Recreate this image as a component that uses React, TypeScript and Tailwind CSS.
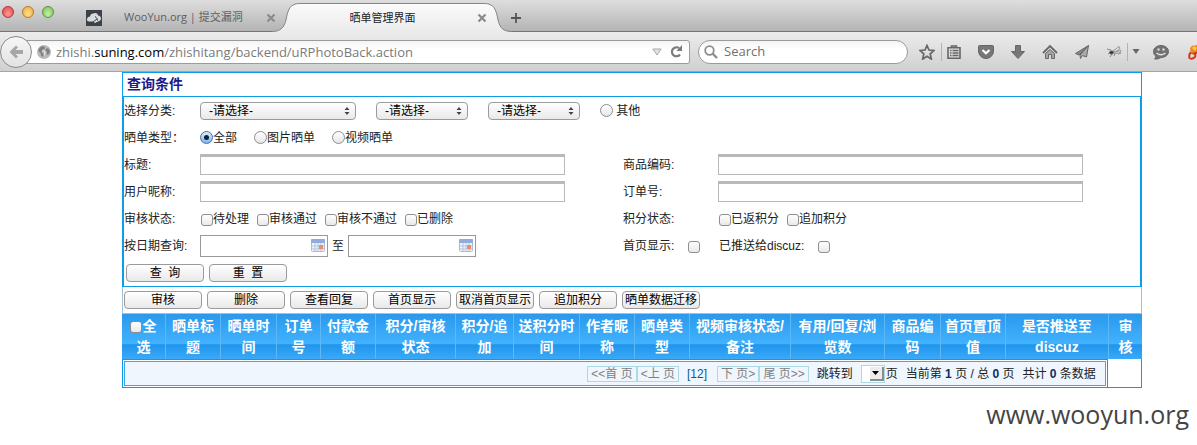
import type { ReactNode } from "react";

const UI_FONT = "font-['Open_Sans','Noto_Sans_CJK_SC',sans-serif]";

const aqua = "border border-[#9a9a9a] bg-linear-to-b from-white via-[#f4f4f4] via-50% to-[#e9e9e9]";

const columns = [
  { title: "全选", width: 43, check: true },
  { title: "晒单标题", width: 55 },
  { title: "晒单时间", width: 56 },
  { title: "订单号", width: 44 },
  { title: "付款金额", width: 55 },
  { title: "积分/审核状态", width: 80 },
  { title: "积分/追加", width: 58 },
  { title: "送积分时间", width: 66 },
  { title: "作者昵称", width: 55 },
  { title: "晒单类型", width: 55 },
  { title: "视频审核状态/备注", width: 101 },
  { title: "有用/回复/浏览数", width: 94 },
  { title: "商品编码", width: 56 },
  { title: "首页置顶值", width: 65 },
  { title: "是否推送至discuz", width: 103 },
  { title: "审核", width: 34 },
];

const totalWidth = columns.reduce((sum, c) => sum + c.width, 0);

const actions = ["审核", "删除", "查看回复", "首页显示", "取消首页显示", "追加积分", "晒单数据迁移"];

/* ---------- browser chrome ---------- */

function CloseIcon() {
  return (
    <svg width="10" height="10" viewBox="0 0 10 10" aria-hidden="true">
      <path d="M1.5 1.5 8.5 8.5M8.5 1.5 1.5 8.5" stroke="#8a8a8a" strokeWidth="2.2" />
    </svg>
  );
}

function TabStrip() {
  return (
    <div className="flex h-8 items-stretch border-b border-[#757575] bg-linear-to-b from-[#dedede] to-[#b4b4b4]">
      <div className="flex gap-2 pt-1.5 pl-0.5">
        <span className="size-3 rounded-full border border-[#b0393a] bg-radial-[at_50%_70%] from-[#ff9a94] to-[#de4444]" />
        <span className="size-3 rounded-full border border-[#b57a2c] bg-radial-[at_50%_70%] from-[#ffe08a] to-[#eea63c]" />
        <span className="size-3 rounded-full border border-[#5c9444] bg-radial-[at_50%_70%] from-[#c8f0a4] to-[#72bd58]" />
      </div>

      <div className="ml-8 flex w-48 items-center pt-1">
        <svg width="16" height="16" viewBox="0 0 16 16" aria-hidden="true">
          <rect width="16" height="16" fill="#3d4248" />
          <path d="M1 9.500c0-2 1.500-3 3-3C4.500 4 6 3 8 3.500c1.500-1 4 0 4 2 2 0 3 1.500 3 3 0 1.500-1 2.500-2.500 2.700L9 13 7 11.500H3C1.500 11.500 1 10.500 1 9.500z" fill="#d9dcdf" />
          <path d="M9 6.500c1.500 1 2.500 2 2.500 4M7 12l4-3" stroke="#3d4248" fill="none" />
        </svg>
        <span className="ml-[22px] flex-1 text-[11px] text-[#5f5f5f]">WooYun.org | 提交漏洞</span>
        <button type="button" aria-label="关闭标签页" className="mr-0.5">
          <CloseIcon />
        </button>
      </div>

      <div className="relative -mr-px -mb-px -ml-1.5 flex w-60 items-center pt-1">
        <svg className="absolute inset-0" width="240" height="32" viewBox="0 0 240 32" aria-hidden="true">
          <defs>
            <linearGradient id="tab" x1="0" y1="0" x2="0" y2="1">
              <stop offset="0" stopColor="#fbfbfb" />
              <stop offset="1" stopColor="#ebebeb" />
            </linearGradient>
          </defs>
          <path
            d="M0 31.500C8 31.500 12 28 14 20 16 9 18 3.500 28 3.500H212C222 3.500 224 9 226 20 228 28 231 31.500 240 31.500V32H0Z"
            fill="url(#tab)"
          />
          <path
            d="M0 31.500C8 31.500 12 28 14 20 16 9 18 3.500 28 3.500H212C222 3.500 224 9 226 20 228 28 231 31.500 240 31.500"
            fill="none"
            stroke="#858585"
          />
        </svg>
        <span className="relative flex-1 pl-9 text-center text-[11px] text-[#222]">晒单管理界面</span>
        <button type="button" aria-label="关闭标签页" className="relative mr-[25px] ml-5">
          <CloseIcon />
        </button>
      </div>

      <button type="button" aria-label="新标签页" className="pt-1">
        <svg width="10" height="10" viewBox="0 0 10 10" aria-hidden="true">
          <path d="M5 0V10M0 5H10" stroke="#555" strokeWidth="1.800" />
        </svg>
      </button>
    </div>
  );
}

function ToolIcon({ label, className, children }: { label: string; className?: string; children: ReactNode }) {
  return (
    <button type="button" aria-label={label} className={className}>
      <svg width="16" height="16" viewBox="0 0 16 16" fill="none" stroke="#666" aria-hidden="true">
        {children}
      </svg>
    </button>
  );
}

function Toolbar() {
  return (
    <div className="flex h-10 items-center border-b border-[#a5a5a5] bg-linear-to-b from-[#ececec] to-[#d0d0d0]">
      <button
        type="button"
        aria-label="后退"
        className="relative z-10 flex size-8 items-center justify-center rounded-full border border-[#8a8a8a] bg-linear-to-b from-[#f6f6f6] to-[#e2e2e2]"
      >
        <svg width="16" height="16" viewBox="0 0 16 16" aria-hidden="true">
          <path d="M8 1.500 1.500 8 8 14.500 10 12.500 7.500 10H15V6H7.500L10 3.500Z" fill="#a6a6a6" />
        </svg>
      </button>

      <div className="-ml-4 flex h-6 min-w-0 flex-1 items-center rounded-r-[3px] border border-[#9b9b9b] bg-linear-to-b from-[#f4f4f4] to-white to-40% pr-1.5 pl-5">
        <svg width="14" height="14" viewBox="0 0 14 14" aria-hidden="true">
          <circle cx="7" cy="7" r="7" fill="#b9b9b9" />
          <path d="M2 3.500 5 1 8 2 7.500 4 5 5 4.500 7.500 6.500 8.500 6 12 4 10.500 3.500 8 1.200 6ZM9.500 3l2.500 1 1 3-2 3-1.500-1 .5-2L8.500 5.500Z" fill="#808080" />
          <path d="M5.500 5.500 8 7 7.500 10" stroke="#f2f2f2" fill="none" />
        </svg>
        <div className="ml-[5px] flex-1 text-[13px] leading-5 whitespace-nowrap text-[#7a7a7a]">
          zhishi.<span className="text-black">suning.com</span>/zhishitang/backend/uRPhotoBack.action
        </div>
        <svg width="10" height="8" viewBox="0 0 10 8" aria-hidden="true">
          <path d="M.8 1H9.200L5 7Z" fill="#e2e2e2" stroke="#a8a8a8" />
        </svg>
        <button type="button" aria-label="重新载入" className="ml-2">
          <svg width="13" height="13" viewBox="0 0 13 13" aria-hidden="true">
            <path d="M10 9.500A4.500 4.500 0 1 1 9.200 3.200" fill="none" stroke="#7c7c7c" strokeWidth="2.200" />
            <path d="M12 0V6H6.500Z" fill="#7c7c7c" />
          </svg>
        </button>
      </div>

      <label className="ml-2 flex h-6 w-[210px] items-center rounded-full border border-[#9b9b9b] bg-linear-to-b from-[#f4f4f4] to-white to-40% pl-[5px]">
        <svg width="14" height="14" viewBox="0 0 14 14" fill="none" stroke="#8d8d8d" aria-hidden="true">
          <circle cx="5.500" cy="5.500" r="4.300" strokeWidth="1.800" />
          <path d="M8.500 8.500 13 13" strokeWidth="2.400" />
        </svg>
        <input
          aria-label="Search"
          placeholder="Search"
          className="ml-1.5 min-w-0 flex-1 bg-transparent text-[13px] outline-none placeholder:text-[#707070]"
        />
      </label>

      <ToolIcon label="书签" className="ml-[11px]">
        <path d="M8 1.500 10 6l5 .5-3.800 3.300L12.300 15 8 12.300 3.700 15l1.100-5.200L1 6.500 6 6Z" strokeWidth="1.700" />
      </ToolIcon>
      <span className="ml-1.5 h-[18px] w-px bg-[#b3b3b3]" />
      <div className="ml-1 flex gap-4">
        <ToolIcon label="书签列表">
          <path d="M2 3.800H14V14.200H2ZM5.500 3.500V2H10.500V3.500" strokeWidth="1.600" />
          <path d="M4 6.500H5.500M6.500 6.500H12.500M4 9H5.500M6.500 9H12.500M4 11.500H5.500M6.500 11.500H12.500" strokeWidth="1.300" />
        </ToolIcon>
        <ToolIcon label="Pocket">
          <path d="M.5 2.500Q.5 1.500 1.500 1.500H14.500Q15.500 1.500 15.500 2.500V7A7.500 7.500 0 0 1 .5 7Z" fill="#777" />
          <path d="M4.500 6 8 9.300 11.500 6" stroke="#fff" strokeWidth="2.200" />
        </ToolIcon>
        <ToolIcon label="下载">
          <path d="M5.500 1.500H10.500V7.500H14.500L8 14.500 1.500 7.500H5.500Z" fill="#777" />
        </ToolIcon>
        <ToolIcon label="主页">
          <path d="M1 9 8 2 15 9" strokeWidth="1.800" />
          <path d="M3.500 9.500 8 5.500 12.500 9.500V14.500H9.500V10.500H6.500V14.500H3.500Z" fill="#a5a5a5" />
        </ToolIcon>
        <ToolIcon label="发送">
          <path d="M14.500 1.500 1.500 9.500 5 11Z" fill="#8a8a8a" />
          <path d="M14.500 1.500 12.500 13 8.500 11.500 6.500 14.500 6 11Z" fill="#aaa" />
        </ToolIcon>
        <ToolIcon label="扩展">
          <path d="M1 5 5 6M2 10 5 8M4 13 6 10M8 12 9 9M12 10 15 9" stroke="#888" />
          <path d="M7 7 13 2.500 14 5 9 8ZM9 8 15 6.500 14 9 9 9.500Z" fill="#ddd" stroke="#999" />
          <ellipse cx="5.500" cy="8.500" rx="2" ry="1.600" fill="#333" />
        </ToolIcon>
      </div>
      <span className="ml-[5px] h-[18px] w-px bg-[#b3b3b3]" />
      <button type="button" aria-label="更多" className="ml-1">
        <svg width="8" height="5" viewBox="0 0 8 5" aria-hidden="true">
          <path d="M.5 0H7.500L4 5Z" fill="#666" />
        </svg>
      </button>
      <ToolIcon label="聊天" className="ml-[13px]">
        <path d="M8 1.500C12 1.500 15.500 4 15.500 7.500S12 13.500 8 13.500C6.500 14.500 4 15.300 1.500 15 2.500 14 3 13 2.500 11.800 1 10.500.5 9 .5 7.500.5 4 4 1.500 8 1.500Z" fill="#727272" />
        <path d="M5.500 4.500V6.500M10.500 4.500V6.500" stroke="#eee" strokeWidth="2" />
        <path d="M3.500 9Q8 12.500 12.500 9" stroke="#e4e4e4" strokeWidth="1.500" />
      </ToolIcon>
      <button type="button" aria-label="Firebug" className="ml-[19px] w-[9px] overflow-hidden">
        <svg className="max-w-none" width="16" height="16" viewBox="0 0 16 16" fill="none" aria-hidden="true">
          <path d="M2 6Q2 1 7 1.500L12 0V8L4 9Z" fill="#f08a1d" />
          <path d="M4 4Q6 1 9 4L7 7Z" fill="#f9c64e" />
          <path d="M3 8Q.5 11 1.500 14 4 16 7 13 8 10 6 9.500 12 7 12 12" stroke="#d2391b" strokeWidth="2" />
        </svg>
      </button>
    </div>
  );
}

/* ---------- form controls ---------- */

function Select({ label, className }: { label: string; className: string }) {
  return (
    <div className={`relative shrink-0 ${className}`}>
      <select aria-label={label} className={`${aqua} block h-[18px] w-full appearance-none rounded-sm pl-2 leading-4 text-black`}>
        <option>-请选择-</option>
      </select>
      <svg className="pointer-events-none absolute top-[5px] right-1.5" width="6" height="8" viewBox="0 0 6 8" aria-hidden="true">
        <path d="M3 0 5.500 3H.5ZM3 8 5.500 5H.5Z" fill="#444" />
      </svg>
    </div>
  );
}

function Radio({ name, label, checked }: { name: string; label: string; checked?: boolean }) {
  return (
    <label className="flex items-center whitespace-pre">
      <input
        type="radio"
        name={name}
        defaultChecked={checked}
        className="flex size-[13px] shrink-0 appearance-none items-center justify-center rounded-full border border-[#8e8e8e] bg-linear-to-b from-white to-[#e6e6e6] checked:border-[#4f6f9f] checked:from-[#dcedfb] checked:to-[#79b8ee] checked:before:size-[5px] checked:before:rounded-full checked:before:bg-[#10203c]"
      />
      {label}
    </label>
  );
}

function Checkbox({ label, id }: { label?: string; id?: string }) {
  const box = (
    <input
      type="checkbox"
      id={id}
      className="mt-0.5 size-3 shrink-0 appearance-none rounded-[3px] border border-[#8e8e8e] bg-linear-to-b from-white to-[#e9e9e9] checked:to-[#79b8ee]"
    />
  );
  if (!label) return box;
  return (
    <label className="flex items-center">
      {box}
      {label}
    </label>
  );
}

function TextField({ id }: { id: string }) {
  return (
    <input
      id={id}
      type="text"
      className="h-[21px] w-[365px] border border-t-3 border-[#b9b9b9] bg-white px-1 outline-none"
    />
  );
}

function DateField({ id, label }: { id: string; label: string }) {
  return (
    <div className="flex h-[22px] w-32 items-center border border-[#999] bg-white pr-0.5">
      <input id={id} aria-label={label} type="text" className="min-w-0 flex-1 bg-transparent px-1 outline-none" />
      <svg width="14" height="13" viewBox="0 0 14 13" aria-hidden="true">
        <rect x=".5" y=".5" width="13" height="12" rx="1" fill="#eef3fb" stroke="#a9bbd8" />
        <path d="M0 1Q0 0 1 0H13Q14 0 14 1V4H0Z" fill="#8facdd" />
        <path d="M1 7H13M1 10H13M4 4V12M7 4V12M10 4V12" stroke="#b4c4de" />
        <rect x="8" y="6" width="4" height="4" fill="#ef8a72" />
      </svg>
    </div>
  );
}

function PushButton({ children, submit }: { children: ReactNode; submit?: boolean }) {
  return (
    <button
      type={submit ? "submit" : "button"}
      className={`${aqua} h-[18px] w-[78px] rounded-sm text-center leading-4 whitespace-pre text-black`}
    >
      {children}
    </button>
  );
}

function Row({ children }: { children: ReactNode }) {
  return <div className="grid h-[27px] grid-cols-[76px_423px_95px_1fr] items-center">{children}</div>;
}

function QueryForm() {
  return (
    <form className="border-x-2 border-y border-[#0d9ce6] text-xs text-[#222]" onSubmit={(e) => e.preventDefault()}>
      <Row>
        <span>选择分类:</span>
        <div className="flex items-center gap-5">
          <Select label="一级分类" className="w-[156px]" />
          <Select label="二级分类" className="w-[92px]" />
          <Select label="三级分类" className="w-[92px]" />
          <Radio name="category" label=" 其他" />
        </div>
      </Row>
      <Row>
        <span>晒单类型：</span>
        <div className="flex items-center gap-[17px]">
          <Radio name="kind" label="全部" checked />
          <Radio name="kind" label="图片晒单" />
          <Radio name="kind" label="视频晒单" />
        </div>
      </Row>
      <Row>
        <label htmlFor="title">标题:</label>
        <TextField id="title" />
        <label htmlFor="product">商品编码:</label>
        <TextField id="product" />
      </Row>
      <Row>
        <label htmlFor="nick">用户昵称:</label>
        <TextField id="nick" />
        <label htmlFor="order">订单号:</label>
        <TextField id="order" />
      </Row>
      <Row>
        <span>审核状态:</span>
        <div className="flex items-center gap-2 pl-px">
          <Checkbox label="待处理" />
          <Checkbox label="审核通过" />
          <Checkbox label="审核不通过" />
          <Checkbox label="已删除" />
        </div>
        <span>积分状态:</span>
        <div className="flex items-center gap-2 pl-px">
          <Checkbox label="已返积分" />
          <Checkbox label="追加积分" />
        </div>
      </Row>
      <Row>
        <label htmlFor="from">按日期查询:</label>
        <div className="flex items-center gap-1">
          <DateField id="from" label="开始日期" />
          至
          <DateField id="to" label="结束日期" />
        </div>
        <div className="flex items-center gap-3.5">
          <label htmlFor="home">首页显示:</label>
          <Checkbox id="home" />
        </div>
        <div className="flex items-center gap-3.5 pl-px">
          <label htmlFor="discuz">已推送给discuz:</label>
          <Checkbox id="discuz" />
        </div>
      </Row>
      <div className="flex h-[27px] items-center gap-[5px] pl-0.5">
        <PushButton submit>{"查  询"}</PushButton>
        <PushButton>{"重  置"}</PushButton>
      </div>
    </form>
  );
}

/* ---------- result list ---------- */

function PageLink({ children }: { children: ReactNode }) {
  return (
    <button type="button" className="h-4 border border-[#add8e6] px-[3px] leading-[14px] text-[#808080]">
      {children}
    </button>
  );
}

function Count({ children }: { children: ReactNode }) {
  return <b className="text-[#0a2c66]">{children}</b>;
}

function Pager() {
  return (
    <div className="flex h-[25px] items-center justify-end border border-[#3aa8f0] bg-[#eff6fe] pr-[9px] text-xs whitespace-pre text-[#222]">
      <PageLink>{"<<首 页"}</PageLink>
      <PageLink>{"<上 页"}</PageLink>
      <span className="mr-2.5 ml-2 text-[#0b5a8c]">[12]</span>
      <PageLink>{"下 页>"}</PageLink>
      <PageLink>{"尾 页>>"}</PageLink>
      <span className="mr-2 ml-2">跳转到</span>
      <span className="relative">
        <select aria-label="跳转到" className="block h-[18px] w-6 appearance-none border border-[#add8e6] bg-white" />
        <span className="pointer-events-none absolute top-0.5 right-px flex size-3.5 items-center justify-center border-r-2 border-b-2 border-[#8c8c8c] bg-[#ececec]">
          <svg width="7" height="4" viewBox="0 0 7 4" aria-hidden="true">
            <path d="M0 0H7L3.500 4Z" fill="#000" />
          </svg>
        </span>
      </span>
      <div className="ml-px flex gap-2">
        <span>页</span>
        <span>
          当前第 <Count>1</Count> 页 / 总 <Count>0</Count> 页
        </span>
        <span>
          共计 <Count>0</Count> 条数据
        </span>
      </div>
    </div>
  );
}

function ResultTable() {
  return (
    <table className="w-full table-fixed border-separate border-spacing-0">
      <colgroup>
        {columns.map((c) => (
          <col key={c.title} style={{ width: `${(c.width / totalWidth) * 100}%` }} />
        ))}
      </colgroup>
      <thead>
        <tr className="bg-[linear-gradient(to_bottom,#2a98ec_0%,#42b3ff_67%,#2095ec_68%,#3aa9f8_100%)]">
          {columns.map((c) => (
            <th
              key={c.title}
              scope="col"
              className="h-[45px] border-l border-[#5cb8f8] p-0 px-[3px] text-center text-sm leading-[21px] font-bold text-white first:border-l-0 last:px-1.5"
            >
              {c.check && (
                <input
                  type="checkbox"
                  aria-label="全选"
                  className="-mb-0.5 inline-block size-3 appearance-none rounded-[3px] border border-[#8e8e8e] bg-linear-to-b from-white to-[#e9e9e9]"
                />
              )}
              {c.title}
            </th>
          ))}
        </tr>
      </thead>
      <tbody>
        <tr>
          <td colSpan={columns.length - 1} className="border border-[#0d9ce6] p-px">
            <Pager />
          </td>
          <td className="border-r border-b border-[#0d9ce6]" />
        </tr>
      </tbody>
    </table>
  );
}

export default function App() {
  return (
    <div className="min-w-[1100px] bg-white">
      <header className={UI_FONT}>
        <TabStrip />
        <Toolbar />
      </header>
      <main className="mr-[55px] ml-[122px] font-['Liberation_Sans','Noto_Sans_CJK_SC',sans-serif]">
        <h1 className="h-6 border border-b-0 border-[#0d9ce6] pl-1 text-sm leading-[22px] font-bold text-[#1a1a8c]">查询条件</h1>
        <QueryForm />
        <div className="flex h-[27px] items-center gap-[5px] border-x border-b border-[#a9bfd4] pl-px text-xs">
          {actions.map((a) => (
            <PushButton key={a}>{a}</PushButton>
          ))}
        </div>
        <ResultTable />
      </main>
      <footer className={`${UI_FONT} flex justify-end pt-2 pr-2 text-[25px] leading-9 text-[#444]`}>www.wooyun.org</footer>
    </div>
  );
}
